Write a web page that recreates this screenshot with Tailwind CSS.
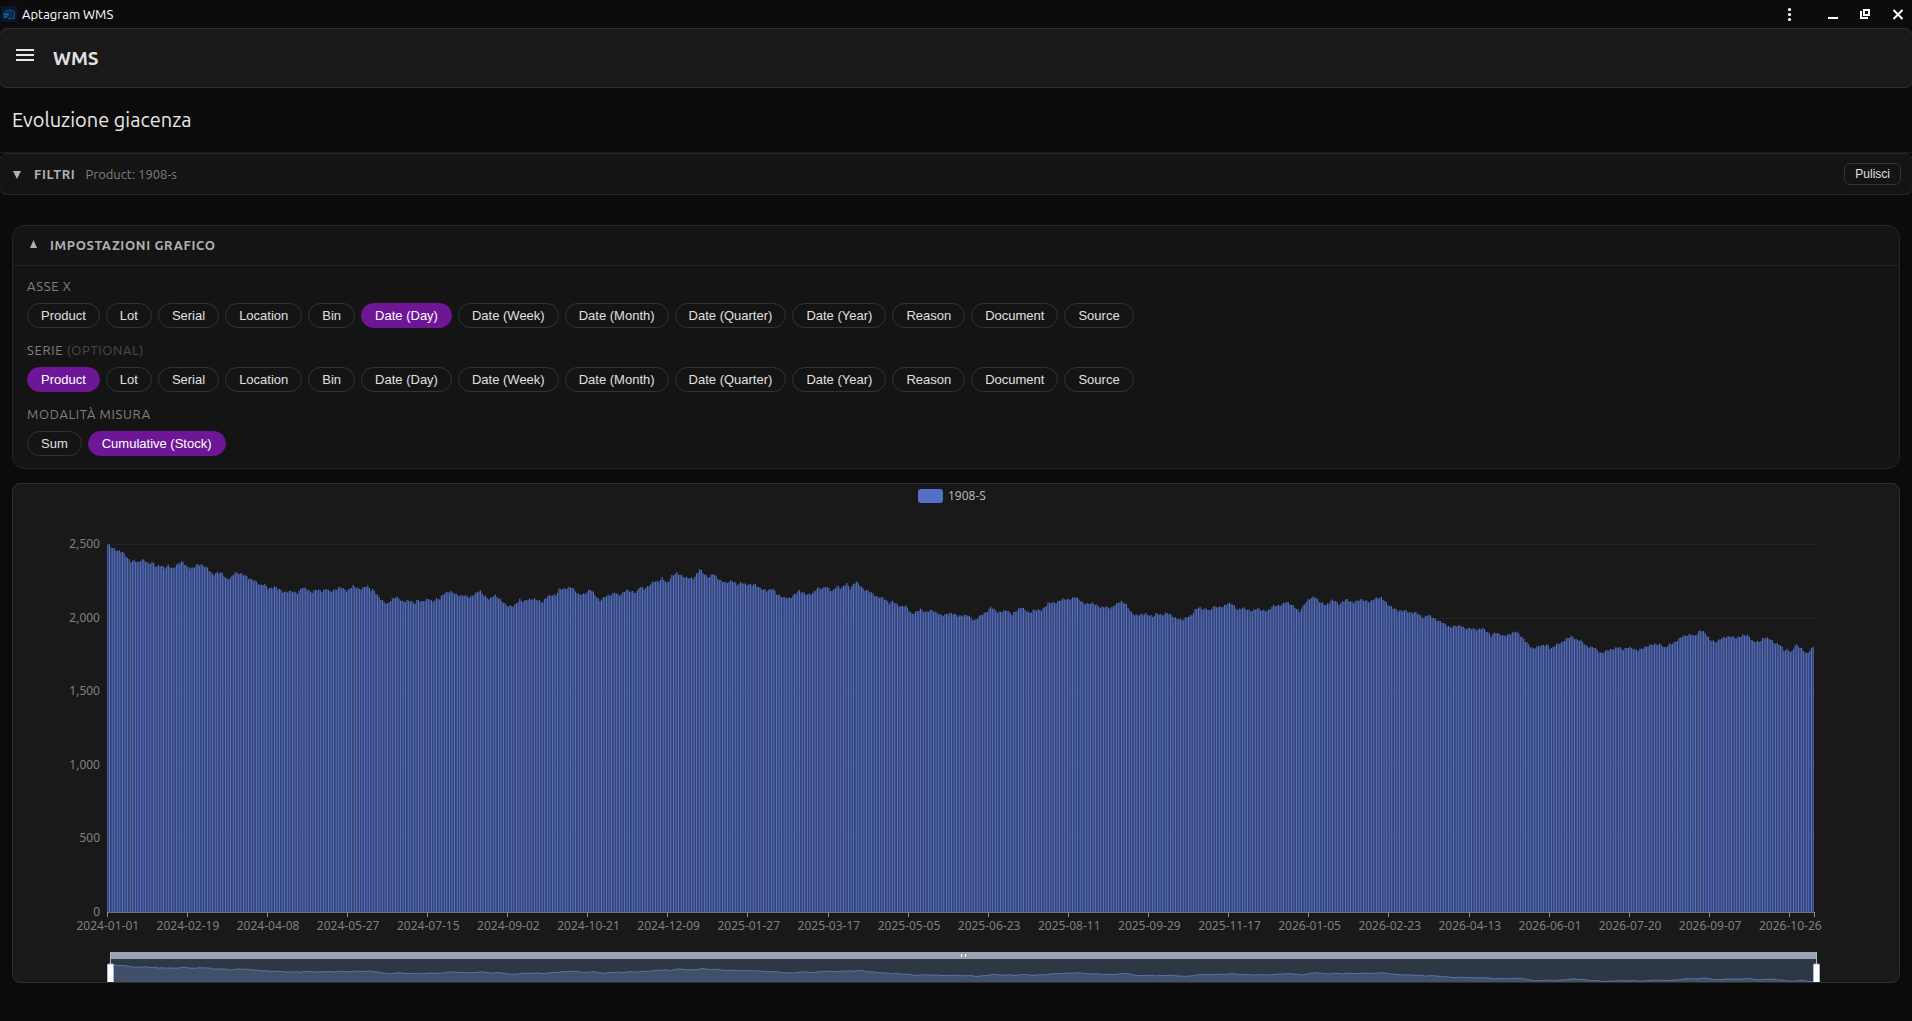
<!DOCTYPE html>
<html lang="it">
<head>
  <meta charset="UTF-8" />
  <meta name="viewport" content="width=device-width, initial-scale=1.0" />
  <title>Aptagram WMS</title>
  <script src="https://cdn.jsdelivr.net/npm/@tailwindcss/browser@4"></script>
</head>
<body class="bg-[#0b0b0b] min-h-screen overflow-x-hidden text-[#e0e0e0] font-['Ubuntu','Noto_Sans',sans-serif]">

  <!-- Barra del titolo -->
  <div class="flex items-center h-7 pl-px pr-2 bg-[#0c0c0c]">
    <svg class="w-4 h-4 mr-[5px]" viewBox="0 0 16 16">
      <rect width="16" height="16" fill="#07182f" />
      <path d="M3 12V6.500C4 4 11 3 13.500 6v6.500H7" fill="#0b2a50" stroke="#1d4a78" stroke-width="1" />
      <path d="M3 8.500h3M5.500 7l2 2L5 11M3 11.500h2" fill="none" stroke="#128a9f" stroke-width="1" />
    </svg>
    <span class="text-[13px] leading-4 text-white">Aptagram WMS</span>
    <div class="ml-auto flex items-center text-white">
      <button type="button" aria-label="Menu" class="mr-8">
        <svg class="w-3 h-4" viewBox="0 0 12 16" fill="currentColor"><circle cx="5.500" cy="3.500" r="1.600" /><circle cx="5.500" cy="8.500" r="1.600" /><circle cx="5.500" cy="13.500" r="1.600" /></svg>
      </button>
      <button type="button" aria-label="Riduci" class="mr-5">
        <svg class="w-3 h-4" viewBox="0 0 12 16" fill="currentColor"><rect x="0" y="11" width="10" height="2" /></svg>
      </button>
      <button type="button" aria-label="Ripristina" class="mr-5">
        <svg class="w-3 h-4" viewBox="0 0 12 16" fill="none" stroke="currentColor" stroke-width="2"><path d="M4 4h5v5H4zM1 5v7h7" /></svg>
      </button>
      <button type="button" aria-label="Chiudi">
        <svg class="w-3 h-4" viewBox="0 0 12 16" fill="none" stroke="currentColor" stroke-width="2"><path d="M1.500 4l9 9M10.500 4l-9 9" /></svg>
      </button>
    </div>
  </div>

  <header class="flex items-center -mx-px h-[60px] px-4 border border-[#2e2e2e] rounded-lg bg-[#191919]">
    <button type="button" aria-label="Apri menu" class="mr-[19px] pb-[6px]">
      <svg class="block w-[18px] h-3" viewBox="0 0 18 12" fill="#e8e8e8"><path d="M0 0h18v2H0zM0 5h18v2H0zM0 10h18v2H0z" /></svg>
    </button>
    <span class="text-[19px] font-semibold">WMS</span>
  </header>

  <main>
    <h1 class="px-3 pt-4 h-16 text-xl leading-8 text-[#e8e8e8]">Evoluzione giacenza</h1>

    <section class="border-t border-[#1c1c1c]">
      <div class="flex items-center -mx-px h-[42px] pl-[13px] pr-3 border border-[#262626] rounded-lg bg-[#141414]">
        <button type="button" class="flex items-center pt-px text-[13px] text-[#b0b0b0]">
          <svg class="w-2 h-2 mr-[13px]" viewBox="0 0 8 8" fill="#b0b0b0"><path d="M0 0h8L4 8z" /></svg>
          <span class="font-semibold tracking-wider">FILTRI</span>
        </button>
        <span class="ml-[10px] pt-px text-[13px] text-[#808080]">Product: 1908-s</span>
        <button type="button" class="ml-auto -mr-px h-[22px] px-[10px] border border-[#333] rounded-md text-xs text-[#e0e0e0] font-['Liberation_Sans',sans-serif]">Pulisci</button>
      </div>
    </section>

    <section class="mx-3 mt-[30px] border border-[#262626] rounded-xl bg-[#141414]">
      <div class="flex items-center h-10 px-4 border-b border-[#222]">
        <button type="button" class="flex items-center text-[13px] text-[#b0b0b0]">
          <svg class="w-2 h-2 mr-[13px] mb-[3px]" viewBox="0 0 8 8" fill="#b0b0b0"><path d="M1 8h7L4.500 0z" /></svg>
          <span class="font-semibold tracking-wider">IMPOSTAZIONI GRAFICO</span>
        </button>
      </div>
      <div class="flex flex-col gap-3 px-[14px] pt-[10px] pb-3">
        <div>
          <h2 class="mb-[7px] text-[13px] leading-5 text-[#808080] tracking-wider">ASSE X</h2>
          <div id="axisChips" class="flex flex-wrap gap-[6px]"></div>
        </div>
        <div>
          <h2 class="mb-[7px] text-[13px] leading-5 text-[#808080] tracking-wider">SERIE <span class="text-[#4a4a4a]">(OPTIONAL)</span></h2>
          <div id="seriesChips" class="flex flex-wrap gap-[6px]"></div>
        </div>
        <div>
          <h2 class="mb-[7px] text-[13px] leading-5 text-[#808080] tracking-wider">MODALITÀ MISURA</h2>
          <div id="modeChips" class="flex flex-wrap gap-[6px]"></div>
        </div>
      </div>
    </section>

    <section id="chart" class="mx-3 mt-[14px] h-[500px] border border-[#2e2e2e] rounded-lg bg-[#191919] overflow-hidden"></section>
  </main>

  <script>
    const fields = ['Product', 'Lot', 'Serial', 'Location', 'Bin', 'Date (Day)', 'Date (Week)', 'Date (Month)',
      'Date (Quarter)', 'Date (Year)', 'Reason', 'Document', 'Source'];

    const chip = 'h-[25px] px-[13px] border rounded-full text-[13px] leading-4 cursor-pointer font-[\'Liberation_Sans\',sans-serif]';
    const chipOff = 'border-[#333] text-[#e0e0e0]';
    const chipOn = 'border-[#6e1796] bg-[#6e1796] text-white';

    function renderChips(id, labels, active) {
      const box = document.getElementById(id);
      box.innerHTML = labels.map(l =>
        `<button type="button" aria-pressed="${l === active}" class="${chip} ${l === active ? chipOn : chipOff}">${l}</button>`
      ).join('');
      box.querySelectorAll('button').forEach(b => {
        b.addEventListener('click', () => renderChips(id, labels, b.textContent));
      });
    }

    renderChips('axisChips', fields, 'Date (Day)');
    renderChips('seriesChips', fields, 'Product');
    renderChips('modeChips', ['Sum', 'Cumulative (Stock)'], 'Cumulative (Stock)');

    // Giacenza: tratti campionati, ogni tratto ha la sua origine e la sua scala
    const tracks = [
      { x: -107, y: -74, k: 2.45, pts: [263,223,272,232,285,242,298,245,318,275,328,271,337,278,346,268,357,274,363,283,371,275,381,292,388,285,402,293,411,286,421,297,430,285,444,274,458,292,470,295,480,283,492,285,505,292,520,315,530,307,542,309,553,328,563,324,573,308,590,312,602,318,606,325,620,330,637,347,645,340,656,357,671,350,682,358,694,367,712,363,727,370,738,352,749,356,761,368,774,358,787,364,798,355,806,365,821,358,832,351,849,363,863,347,880,358,898,347,907,360,913,358,922,375,933,390,947,402,958,388,970,380,984,395,1002,391,1014,401,1022,388,1030,396,1050,385,1058,397,1066,386,1074,388,1085,371,1102,364,1125,378,1137,376,1149,382,1160,373,1173,361,1187,380,1197,388,1210,374,1225,390,1242,408,1257,408,1272,388,1280,395,1293,388,1310,387,1327,397,1340,377,1360,375,1369,356,1382,357,1398,350,1415,373,1430,372,1445,357,1455,373,1467,392,1482,378,1497,374,1505,366,1515,377,1532,360,1550,366,1558,368] },
      { x: 532, y: -24, k: 2.45, pts: [0,198,10,207,25,195,35,183,45,185,55,173,67,191,78,168,90,158,110,172,132,175,147,147,160,165,170,173,179,160,195,180,212,189,226,181,240,195,248,187,262,194,284,194,294,205,312,212,326,205,335,222,352,232,368,235,390,211,400,218,410,224,424,220,436,203,447,206,457,199,471,214,484,197,492,206,507,190,515,206,530,184,549,209,562,213,580,230,597,234,612,250,620,243,637,260,652,257,666,283,675,277,688,267,700,277,716,270,725,277,742,287,755,280,770,281,780,288,804,285,819,303,837,284,850,277,860,260,877,277,900,271,911,283,935,261,955,280,965,270,985,270,1003,247,1020,248,1035,237,1050,239,1068,230,1078,240,1090,252,1110,249,1130,263,1140,260,1155,265,1163,255,1178,244,1190,250,1205,279,1215,286,1240,281,1256,290,1266,280,1280,286,1292,278,1312,294,1330,300,1340,291,1352,286,1360,270,1370,262,1380,268,1390,266,1397,273,1404,260,1428,261,1440,250,1450,250,1465,270,1478,263,1490,270,1500,273,1512,265] },
      { x: 1153, y: 36, k: 2.405, pts: [0,90,17,93,30,77,45,77,62,65,80,80,93,95,105,72,115,57,130,50,140,64,158,76,170,60,180,62,187,74,205,58,222,68,240,58,262,66,275,55,290,52,305,73,315,82,330,92,350,92,358,99,375,97,391,115,402,103,420,118,435,126,455,142,470,137,485,138,490,146,508,145,520,150,533,144,545,156,555,168,563,157,585,168,600,162,615,154,630,175,654,207,668,198,690,194,697,208,710,193,725,187,735,176,748,168,758,179,770,181,785,200,803,202,818,221,830,212,850,206,862,200,870,210,885,201,907,212,917,205,940,193,963,193,972,205,980,194,995,188,1013,169,1035,163,1043,169,1058,150,1070,160,1080,180,1095,186,1110,173,1130,169,1145,174,1160,165,1173,166,1182,184,1200,185,1210,173,1225,176,1235,189,1250,195,1258,211,1268,208,1276,218,1286,193,1300,205,1313,222,1325,205,1331,195] }
    ];

    const DAYS = 1044;
    const knots = [];
    tracks.forEach(t => {
      for (let i = 0; i < t.pts.length; i += 2) {
        const day = (t.x + t.pts[i] / t.k) / 1707 * DAYS;
        const value = 2500 - (t.y + t.pts[i + 1] / 3) / 368 * 2500;
        if (!knots.length || day > knots[knots.length - 1][0]) knots.push([day, value]);
      }
    });

    const stock = [];
    for (let d = 0, k = 0; d < DAYS; d++) {
      while (k < knots.length - 2 && knots[k + 1][0] < d) k++;
      const [x0, v0] = knots[k];
      const [x1, v1] = knots[k + 1];
      const f = Math.min(1, Math.max(0, (d - x0) / (x1 - x0)));
      stock.push(Math.min(2500, v0 + (v1 - v0) * f + Math.sin(d * 2.1) * 6));
    }

    const box = document.getElementById('chart');

    function drawChart() {
      const W = box.clientWidth, H = 498;
      const left = 94, right = W - 85, top = 60, bottom = 428;
      const step = (right - left) / DAYS;
      const yOf = v => bottom - v / 2500 * (bottom - top);
      let s = `<svg class="block w-full h-[498px] font-['Noto_Sans',sans-serif]" viewBox="0 0 ${W} ${H}" role="img" aria-label="1908-S">`;

      // legenda
      s += `<rect x="${W / 2 - 38}" y="5" width="25" height="14" rx="3" fill="#5470c6"/>`;
      s += `<text x="${W / 2 - 8}" y="16" class="text-xs" fill="#b3b3b3">1908-S</text>`;

      for (let v = 0; v <= 2500; v += 500) {
        const y = Math.round(yOf(v)) + 0.5;
        if (v) s += `<path d="M${left} ${y}H${right}" stroke="#262626"/>`;
        s += `<text x="${left - 7}" y="${y + 3.5}" class="text-xs" text-anchor="end" fill="#808080">${v.toLocaleString('en-US')}</text>`;
      }

      let bars = '';
      stock.forEach((v, i) => {
        const x = left + i * step + step * 0.15;
        bars += `M${x.toFixed(2)} ${bottom}V${yOf(v).toFixed(1)}h${(step * 0.7).toFixed(2)}V${bottom}z`;
      });
      s += `<path d="${bars}" fill="#5470c6"/>`;

      s += `<path d="M${left} ${bottom + 0.5}H${right}" stroke="#6e7079"/>`;
      const tick = x => `<path d="M${Math.floor(x) + 0.5} ${bottom}v5" stroke="#8a8c94"/>`;
      for (let d = 0; d < DAYS; d += 49) {
        const x = left + d * step;
        const label = new Date(Date.UTC(2024, 0, 1 + d)).toISOString().slice(0, 10);
        s += tick(x);
        s += `<text x="${x + step / 2}" y="${bottom + 18}" class="text-xs" text-anchor="middle" fill="#808080">${label}</text>`;
      }
      s += tick(right);

      // cursore di zoom
      const zl = left + 3.5, zr = right + 2.5, zt = 468;
      const zx = i => (zl + i / (DAYS - 1) * (zr - zl)).toFixed(1);
      const zy = v => (zt + 12.5 + (2500 - v) * 0.023).toFixed(1);
      const line = stock.map((v, i) => `${zx(i)} ${zy(v)}`).join('L');
      s += `<rect x="${zl}" y="${zt}" width="${zr - zl}" height="40" fill="#2e3744"/>`;
      s += `<path d="M${zl} ${H}L${line}V${H}z" fill="#414f69"/>`;
      s += `<path d="M${line}" fill="none" stroke="#5a76ae"/>`;
      s += `<rect x="${zl}" y="${zt}" width="${zr - zl}" height="7" fill="#9ca2b0"/>`;
      s += `<path d="M${(zl + zr) / 2 - 2} ${zt + 2}v3m4 -3v3" stroke="#fff" stroke-width="1"/>`;
      [zl, zr].forEach(x => {
        s += `<path d="M${x} ${zt}V${H}" stroke="#acb8d1"/>`;
        s += `<rect x="${x - 3}" y="${zt + 12}" width="6" height="30" rx="1" fill="#fff" stroke="#acb8d1"/>`;
      });
      box.innerHTML = s + '</svg>';
    }

    new ResizeObserver(drawChart).observe(box);
  </script>
</body>
</html>
